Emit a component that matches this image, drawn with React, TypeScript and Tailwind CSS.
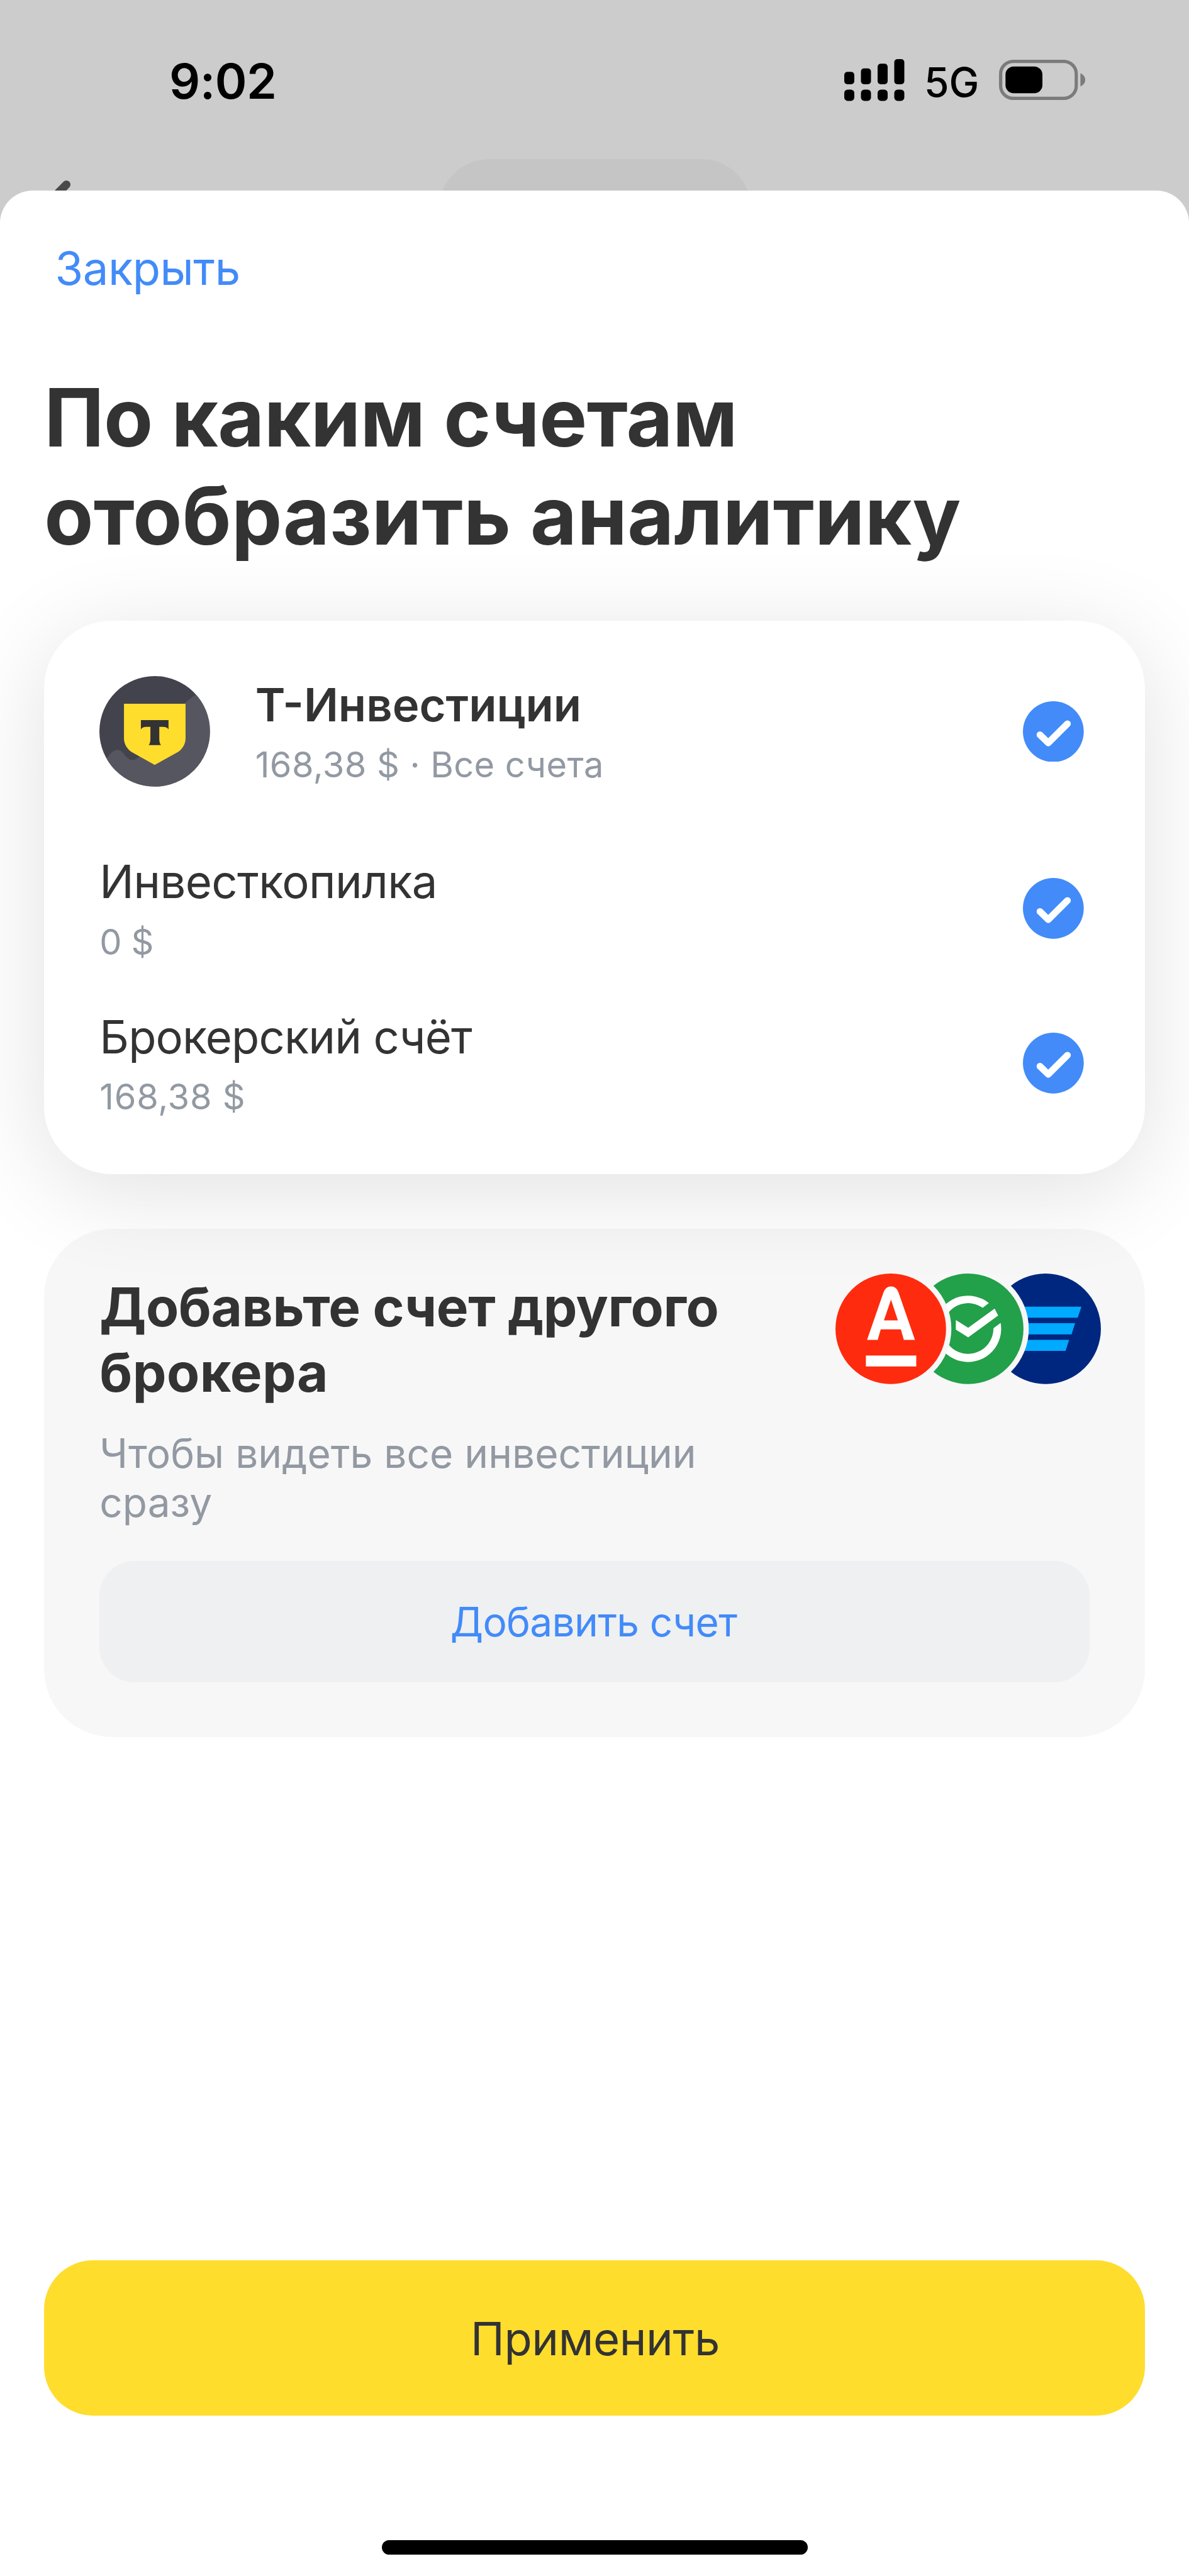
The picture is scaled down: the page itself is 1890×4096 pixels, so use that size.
function SignalIcon() {
  const tops = [20.3, 14.7, 7.2, 0];
  return (
    <svg className="h-[67px] w-[96px]" viewBox="0 0 96 67" fill="#000">
      {tops.map((top, i) => (
        <g key={top}>
          <rect x={i * 26.5} y={top} width="16" height={40 - top} rx="5" />
          <rect x={i * 26.5} y="48.4" width="16" height="18" rx="5.5" />
        </g>
      ))}
    </svg>
  );
}

function BatteryIcon() {
  return (
    <svg className="h-[64px] w-[137px]" viewBox="0 0 137 64">
      <rect x="2.6" y="2.6" width="120.2" height="58.8" rx="20" fill="none" stroke="#7b7b7b" strokeWidth="5.2" />
      <rect x="10.3" y="10.7" width="58.7" height="42.6" rx="13" fill="#000" />
      <path d="M129.4 21.6C134 23.5 137 27.4 137 32S134 40.5 129.4 42.4Z" fill="#7b7b7b" />
    </svg>
  );
}

function CheckIcon() {
  return (
    <svg className="h-[96.7px] w-[96.7px] shrink-0" viewBox="0 0 396 396">
      <circle cx="198" cy="198" r="198" fill="#428BF9" />
      <path
        d="M111 218.5L165 271.5L290 146.5"
        fill="none"
        stroke="#fff"
        strokeWidth="44"
        strokeLinecap="round"
        strokeLinejoin="round"
      />
    </svg>
  );
}

function InvestLogo() {
  return (
    <svg className="h-[175.8px] w-[175.8px] shrink-0" viewBox="0 0 720 720">
      <defs>
        <clipPath id="invest-disc">
          <circle cx="360" cy="360" r="360" />
        </clipPath>
      </defs>
      <g clipPath="url(#invest-disc)">
        <rect width="720" height="720" fill="#43434D" />
        <path
          d="M40 545C75 495 100 480 117 480C160 480 170 547 217 547C270 547 330 420 420 320C480 255 540 190 572 162C600 138 625 120 660 105H720V720H0Z"
          fill="#565660"
        />
        <path
          d="M160 180H561V405C561 445 538 479 504 499L360 579L217 499C183 479 160 445 160 405Z"
          fill="#FFDD2D"
        />
        <path
          d="M270 287H450V347Q440 331 415 331H390V410Q390 436 401 450H321Q332 436 332 410V331H305Q280 331 270 347Z"
          fill="#333333"
        />
      </g>
    </svg>
  );
}

function BrokerLogos() {
  return (
    <svg className="-mr-[18.5px] h-[175.8px] w-[422px] shrink-0" viewBox="0 0 576 240">
      <circle cx="456" cy="120" r="120" fill="#002780" />
      <path d="M400 72H533.7L525.7 96H400ZM400 108H520L512.3 132H400ZM400 144H507L499.3 168H400Z" fill="#00AAFF" />
      <circle cx="288" cy="120" r="131.5" fill="#F7F7F7" />
      <circle cx="288" cy="120" r="120" fill="#23A04A" />
      <path d="M332.8 64A72 72 0 1 0 358.4 107L342.8 118.7A55 55 0 1 1 319.4 74.3Z" fill="#fff" />
      <path d="M261.2 101L288 117.7L345.4 76L353 91L288 138.7L261.2 121.7Z" fill="#fff" />
      <circle cx="120" cy="120" r="131.5" fill="#F7F7F7" />
      <circle cx="120" cy="120" r="120" fill="#FF2B0E" />
      <path
        fillRule="evenodd"
        d="M68.5 144L104 41.5Q108.5 28 120.5 28T137 41.5L172.5 144H148.4L141.9 121.3H98.2L91.7 144ZM120.5 56.7L105.1 101.7H135.4Z"
        fill="#fff"
      />
      <rect x="66" y="178" width="109.3" height="23.7" fill="#fff" />
    </svg>
  );
}

function StatusBar() {
  return (
    <div className="flex h-[252.8px] shrink-0 items-start justify-between pl-[269px] pr-[165px]">
      <span className="mt-[88.5px] text-[77px] leading-[80px] font-semibold tracking-[-0.5px] text-black">9:02</span>
      <div className="flex items-start">
        <div className="mt-[93.5px]">
          <SignalIcon />
        </div>
        <span className="mt-[99px] ml-[31px] w-[87.4px] text-[64px] leading-[64px] font-medium text-black">5G</span>
        <div className="mt-[94.8px] ml-[31.6px]">
          <BatteryIcon />
        </div>
      </div>
    </div>
  );
}

/* Navigation bar of the screen beneath, mostly hidden by the sheet. */
function DimmedNavBar() {
  return (
    <div className="flex h-[50px] shrink-0 items-start overflow-hidden pl-[64px]">
      <svg className="mt-[34px] h-[84px] w-[54px] shrink-0" viewBox="0 0 54 84">
        <path
          d="M41.5 6.5L6.500 42L41.5 77.5"
          fill="none"
          stroke="#4a4a4a"
          strokeWidth="13"
          strokeLinecap="round"
          strokeLinejoin="round"
        />
      </svg>
      <div className="ml-[580px] h-[158px] w-[496px] shrink-0 rounded-full bg-[#C5C5C5]" />
    </div>
  );
}

type AccountProps = { title: string; titleClass: string; sub: string; subClass: string };

function AccountText({ title, titleClass, sub, subClass }: AccountProps) {
  return (
    <div className="flex flex-1 flex-col whitespace-nowrap">
      <span className={`text-[72.4px] leading-[88px] text-[#333333] ${titleClass}`}>{title}</span>
      <span className={`mt-[16.7px] text-[56px] leading-[70px] text-[#9299A2] ${subClass}`}>{sub}</span>
    </div>
  );
}

function AccountsCard() {
  return (
    <section className="relative z-10 mt-[88.3px] flex h-[879.8px] shrink-0 flex-col rounded-[108px] bg-white pt-[88.3px] pr-[97px] pl-[88px] shadow-[0_26px_150px_rgba(0,0,0,0.12)]">
      <div className="flex h-[175.8px] items-center">
        <InvestLogo />
        <div className="ml-[71.6px] flex flex-1 pt-[2px]">
          <AccountText
            title="Т-Инвестиции"
            titleClass="font-semibold"
            sub="168,38 $ · Все счета"
            subClass="tracking-[0.4px]"
          />
        </div>
        <CheckIcon />
      </div>
      <div className="mt-[107.1px] flex items-center">
        <AccountText title="Инвесткопилка" titleClass="tracking-[-0.62px]" sub="0 $" subClass="tracking-[-0.5px]" />
        <div className="-mt-[2px]">
          <CheckIcon />
        </div>
      </div>
      <div className="mt-[72px] flex items-center">
        <AccountText title="Брокерский счёт" titleClass="tracking-[-0.9px]" sub="168,38 $" subClass="tracking-[0.7px]" />
        <div className="-mt-[3px]">
          <CheckIcon />
        </div>
      </div>
    </section>
  );
}

function AddBrokerCard() {
  return (
    <section className="mt-[87.9px] flex h-[808px] shrink-0 flex-col rounded-[108px] bg-[#F7F7F7] px-[88px] pt-[70.3px]">
      <div className="flex items-start justify-between">
        <div className="pt-[1px] whitespace-nowrap">
          <h2 className="text-[85.3px] leading-[104px] font-bold text-[#333333]">
            <span className="block tracking-[-0.41px]">Добавьте счет другого</span>
            <span className="block tracking-[0.4px]">брокера</span>
          </h2>
          <p className="mt-[38.5px] text-[64px] leading-[78px] text-[#9299A2]">
            Чтобы видеть все инвестиции
            <br />
            сразу
          </p>
        </div>
        <BrokerLogos />
      </div>
      <button className="mt-[53.7px] h-[193.4px] rounded-[56px] bg-[#EFF0F2] pr-[3px] text-[64px] leading-[78px] tracking-[-0.68px] text-[#428BF9]">
        Добавить счет
      </button>
    </section>
  );
}

export default function App() {
  return (
    <div className="flex h-[4096px] w-[1890px] flex-col overflow-hidden bg-[#CCCCCC] font-['Inter',sans-serif]">
      <StatusBar />
      <DimmedNavBar />
      <main className="flex flex-1 flex-col rounded-t-[52px] bg-white px-[70.3px] pt-[79px]">
        <button className="ml-[17.3px] shrink-0 self-start text-[72.4px] leading-[90px] tracking-[-0.5px] text-[#428BF9]">
          Закрыть
        </button>
        <h1 className="mt-[114.3px] shrink-0 text-[127.7px] leading-[156.2px] font-bold whitespace-nowrap text-[#333333]">
          <span className="block tracking-[-0.6px]">По каким счетам</span>
          <span className="block tracking-[0.26px]">отобразить аналитику</span>
        </h1>
        <AccountsCard />
        <AddBrokerCard />
        <button className="mt-auto h-[247px] shrink-0 rounded-[78px] bg-[#FFDD2D] pt-[2px] pl-[2px] text-[72.4px] leading-[90px] tracking-[-0.44px] text-[#333333]">
          Применить
        </button>
        <div className="mt-[198px] mb-[34.5px] h-[22.5px] w-[677px] shrink-0 self-center rounded-full bg-black" />
      </main>
    </div>
  );
}
